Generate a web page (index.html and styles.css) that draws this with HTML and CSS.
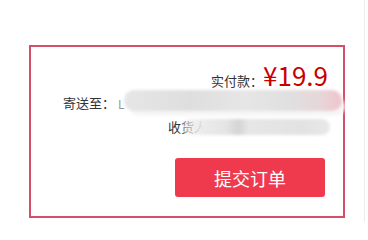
FILE: index.html
```html
<!DOCTYPE html>
<html lang="zh-CN">
<head>
<meta charset="utf-8">
<link rel="stylesheet" href="styles.css">
</head>
<body>
<div class="page">
  <div class="order">
    <div class="total">
      <span class="total-label">实付款：</span>
      <span class="total-price">¥19.9</span>
    </div>
    <div class="addr">
      <span class="label">寄送至：</span>
      <span class="addr-first">L</span>
      <span class="smudge smudge-addr"></span>
    </div>
    <div class="receiver">
      <span class="label">收货人：</span>
      <span class="smudge smudge-recv"></span>
    </div>
    <div class="actions">
      <button class="submit">提交订单</button>
    </div>
  </div>
</div>
</body>
</html>
```
FILE: styles.css
```css
html, body {
  margin: 0;
  padding: 0;
  background: #fff;
}
body {
  font-family: "Noto Sans CJK SC", "Microsoft YaHei", sans-serif;
  color: #333;
}
.page {
  width: 365px;
  height: 222px;
  box-sizing: border-box;
  border-right: 1px solid #ececec;
  padding: 45px 0 0 29px;
}
.order {
  width: 316px;
  height: 173px;
  box-sizing: border-box;
  border: 2px solid #d4506a;
  padding: 13px 15px 0 0;
}
.total {
  display: flex;
  justify-content: flex-end;
  align-items: baseline;
  height: 30px;
}
.total-label {
  font-size: 13px;
  color: #333;
  white-space: nowrap;
}
.total-price {
  font-size: 26px;
  line-height: 30px;
  color: #c80000;
  white-space: nowrap;
}
.addr {
  display: flex;
  align-items: center;
  height: 20px;
  margin-top: 3px;
  padding-left: 32px;
}
.label {
  flex: none;
  font-size: 13px;
  line-height: 20px;
  color: #333;
  white-space: nowrap;
}
.addr-first {
  flex: none;
  font-size: 12px;
  color: #999;
  margin-left: 3px;
}
.smudge {
  display: block;
  flex: none;
  border-radius: 10px;
  filter: blur(1.5px);
}
.smudge-addr {
  width: 218px;
  height: 21px;
  margin-left: -1px;
  margin-top: -6px;
  background: linear-gradient(to right, #e6e6e6 0%, #dedede 30%, #e6e6e6 55%, #e0e0e0 75%, #e6d6d9 90%, #f0c3cb 100%);
  box-shadow: 4px 6px 0 -1px #f6f6f6;
}
.receiver {
  display: flex;
  align-items: center;
  height: 20px;
  margin-top: 4px;
  padding-left: 137px;
}
.smudge-recv {
  width: 148px;
  height: 16px;
  margin-left: -38px;
  border-radius: 8px;
  background: linear-gradient(to right, rgba(235,235,235,0.5) 0%, #ebebeb 15%, #e4e4e4 30%, #d4d4d4 38%, #e6e6e6 45%, #e2e2e2 80%, #e8e8e8 100%);
}
.actions {
  display: flex;
  justify-content: flex-end;
  margin-top: 21px;
  padding-right: 3px;
}
.submit {
  width: 150px;
  height: 39px;
  border: 0;
  border-radius: 3px;
  background: #ef3a4e;
  color: #fff;
  font-family: "Noto Sans CJK SC", "Microsoft YaHei", sans-serif;
  font-size: 18px;
  padding: 0;
}
```
